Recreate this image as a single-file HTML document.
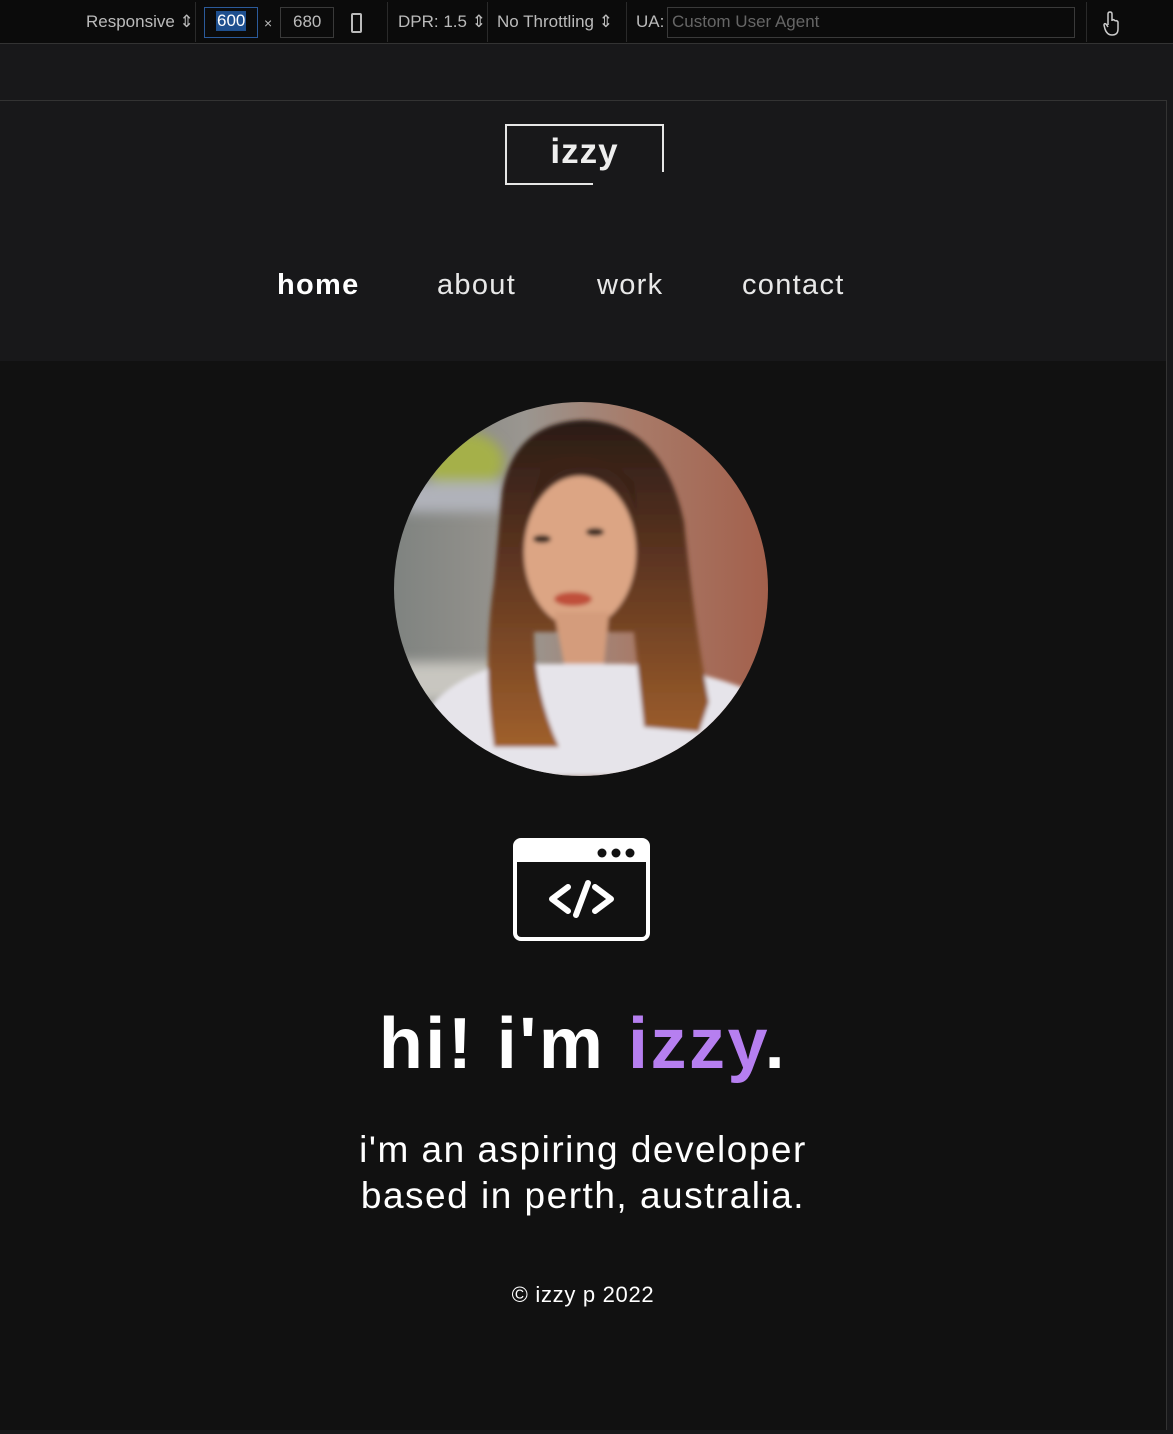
<!DOCTYPE html>
<html><head><meta charset="utf-8"><style>
*{margin:0;padding:0;box-sizing:border-box}
body{width:1173px;height:1434px;background:#18181a;font-family:"Liberation Sans",sans-serif;position:relative;overflow:hidden;color:#fff}
.tb{position:absolute;left:0;top:0;width:1173px;height:44px;background:#0b0b0b;border-bottom:1px solid #333;font-size:17px;color:#bbb}
.tb span{position:absolute;top:12px}
.sep{position:absolute;top:2px;width:1px;height:40px;background:#2a2a2a}
.box{position:absolute;top:7px;height:31px;border:1px solid #3a3a3a}
.page{position:absolute;left:0;top:100px;width:1167px;height:1330px;background:#111;border-top:1px solid #333;border-right:1px solid #333}
.hdr{position:absolute;left:0;top:0;width:1166px;height:260px;background:#18181a}
.nav{position:absolute;top:168px;font-size:29px;color:#e8e8e8;letter-spacing:1.3px}
.c{position:absolute;left:0;width:1166px;text-align:center}
</style></head><body>
<div class="tb">
<span style="left:86px">Responsive ⇕</span>
<div class="sep" style="left:195px"></div>
<div class="box" style="left:204px;width:54px;border-color:#2b5a9a"></div>
<span style="left:216px;top:11px;background:#1e4f8e;color:#fff;padding:0 1px">600</span>
<span style="left:264px;font-size:14px;top:15px">×</span>
<div class="box" style="left:280px;width:54px"></div>
<span style="left:293px">680</span>
<div style="position:absolute;left:351px;top:13px;width:11px;height:20px;border:2px solid #bbb;border-radius:2px"></div>
<div class="sep" style="left:387px"></div>
<span style="left:398px">DPR: 1.5 ⇕</span>
<div class="sep" style="left:487px"></div>
<span style="left:497px">No Throttling ⇕</span>
<div class="sep" style="left:626px"></div>
<span style="left:636px">UA:</span>
<div class="box" style="left:667px;width:408px"></div>
<span style="left:672px;color:#666">Custom User Agent</span>
<div class="sep" style="left:1086px"></div>
<svg style="position:absolute;left:1102px;top:11px" width="20" height="26" viewBox="0 0 20 26"><path d="M6 14 V3 Q6 1 8 1 Q10 1 10 3 V10 M10 9 Q12 8 13 10 M13 10 Q15 9 16 11 V18 Q16 24 10 24 Q5 24 3 18 L2 14 Q2 12 4 13 L6 16" fill="none" stroke="#ccc" stroke-width="1.5"/></svg>
</div>
<div class="page">
<div class="hdr">
<div style="position:absolute;left:505px;top:23px;width:159px;height:2px;background:#e6e6e6"></div>
<div style="position:absolute;left:505px;top:23px;width:2px;height:61px;background:#e6e6e6"></div>
<div style="position:absolute;left:505px;top:82px;width:88px;height:2px;background:#e6e6e6"></div>
<div style="position:absolute;left:662px;top:23px;width:2px;height:48px;background:#e6e6e6"></div>
<div style="position:absolute;left:505px;top:31px;width:159px;text-align:center;font-size:35px;color:#eee;letter-spacing:1px;font-weight:bold">izzy</div>
<div class="nav" style="left:277px;font-weight:bold;color:#fff">home</div>
<div class="nav" style="left:437px">about</div>
<div class="nav" style="left:597px">work</div>
<div class="nav" style="left:742px">contact</div>
</div>
<svg style="position:absolute;left:394px;top:301px" width="374" height="374" viewBox="0 0 374 374">
<defs><clipPath id="cp"><circle cx="187" cy="187" r="187"/></clipPath>
<filter id="b"><feGaussianBlur stdDeviation="6"/></filter>
<filter id="b2"><feGaussianBlur stdDeviation="2"/></filter>
<linearGradient id="bg" x1="0" x2="1"><stop offset="0" stop-color="#7f8380"/><stop offset=".35" stop-color="#9a9690"/><stop offset=".65" stop-color="#a87a68"/><stop offset="1" stop-color="#a3604c"/></linearGradient>
<linearGradient id="hair" x1="0" y1="0" x2="0" y2="1"><stop offset="0" stop-color="#2a1c16"/><stop offset=".4" stop-color="#5a3320"/><stop offset="1" stop-color="#a0602c"/></linearGradient>
</defs>
<g clip-path="url(#cp)">
<rect width="374" height="374" fill="url(#bg)"/>
<g filter="url(#b)">
<ellipse cx="70" cy="60" rx="40" ry="30" fill="#a5b048"/>
<rect x="10" y="80" width="100" height="30" fill="#b0b2ba"/>
<rect x="0" y="260" width="130" height="40" fill="#c8c6c0"/>
</g>
<g filter="url(#b2)">
<path d="M40 300 Q80 260 140 262 L230 262 Q300 265 360 290 L374 374 L0 374 Z" fill="#e6e4ea"/>
<path d="M108 90 Q120 20 190 18 Q268 20 290 120 Q300 220 315 300 L305 330 L250 325 L240 230 L140 230 Q140 290 165 345 L100 345 Q88 260 100 180 Z" fill="url(#hair)"/>
<ellipse cx="186" cy="150" rx="56" ry="76" fill="#dca584"/>
<path d="M130 120 Q150 60 200 62 Q240 70 245 130 L240 80 Q200 40 150 60 Z" fill="#3a2418"/>
<path d="M160 210 L215 210 L210 262 L170 262 Z" fill="#d49c7c"/>
<ellipse cx="179" cy="197" rx="19" ry="7" fill="#c0503a"/>
<ellipse cx="148" cy="137" rx="9" ry="4" fill="#3a2a22"/>
<ellipse cx="201" cy="130" rx="9" ry="4" fill="#3a2a22"/>
</g>
</g></svg>
<svg style="position:absolute;left:513px;top:737px" width="137" height="103" viewBox="0 0 137 103">
<rect x="2" y="2" width="133" height="99" rx="6" fill="none" stroke="#fff" stroke-width="4"/>
<path d="M2 8 Q2 2 8 2 L129 2 Q135 2 135 8 L135 24 L2 24 Z" fill="#fff"/>
<circle cx="89" cy="15" r="4.5" fill="#111"/><circle cx="103" cy="15" r="4.5" fill="#111"/><circle cx="117" cy="15" r="4.5" fill="#111"/>
<path d="M55 49 L39 61 L55 73 M82 49 L98 61 L82 73 M75 45 L63 77" fill="none" stroke="#fff" stroke-width="6" stroke-linecap="round" stroke-linejoin="round"/>
</svg>
<div class="c" style="top:902px;font-size:72px;font-weight:bold;letter-spacing:2.5px">hi! i'm <span style="color:#b67ff0">izzy</span>.</div>
<div class="c" style="top:1026px;font-size:37px;line-height:46px;letter-spacing:1.5px">i'm an aspiring developer<br>based in perth, australia.</div>
<div class="c" style="top:1181px;font-size:22px;letter-spacing:.7px">© izzy p 2022</div>
</div>
</body></html>
